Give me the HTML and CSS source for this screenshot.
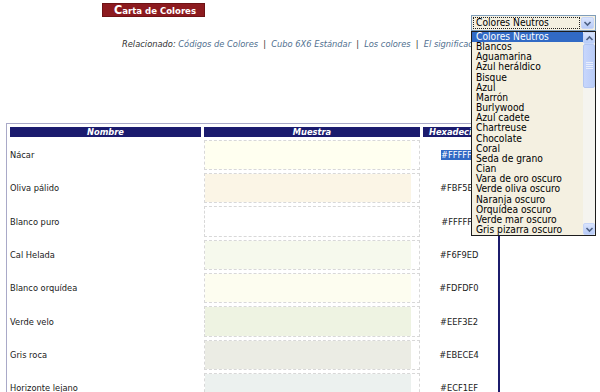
FILE: index.html
```html
<!DOCTYPE html>
<html lang="es">
<head>
<meta charset="utf-8">
<title>Carta de Colores</title>
<link rel="stylesheet" href="styles.css">
</head>
<body>
<div class="title"><span class="cap">C</span>arta de Colores</div>
<p class="related"><span class="lbl">Relacionado:</span> <a href="#">Códigos de Colores</a> <span class="sep">|</span> <a href="#">Cubo 6X6 Estándar</a> <span class="sep">|</span> <a href="#">Los colores</a> <span class="sep">|</span> <a href="#">El significado de los colores</a></p>

<table class="chart">
  <colgroup>
    <col class="c-name">
    <col class="c-chip">
    <col class="c-hex">
  </colgroup>
  <thead>
    <tr><th>Nombre</th><th>Muestra</th><th>Hexadecimal</th></tr>
  </thead>
  <tbody>
    <tr><td class="name">Nácar</td><td class="chip"><div class="fill" style="background:#FFFFF0"></div></td><td class="hex"><span class="sel">#FFFFF0</span></td></tr>
    <tr><td class="name">Oliva pálido</td><td class="chip"><div class="fill" style="background:#FBF5E6"></div></td><td class="hex">#FBF5E6</td></tr>
    <tr><td class="name">Blanco puro</td><td class="chip"><div class="fill" style="background:#FFFFFF"></div></td><td class="hex">#FFFFFF</td></tr>
    <tr><td class="name">Cal Helada</td><td class="chip"><div class="fill" style="background:#F6F9ED"></div></td><td class="hex">#F6F9ED</td></tr>
    <tr><td class="name">Blanco orquídea</td><td class="chip"><div class="fill" style="background:#FDFDF0"></div></td><td class="hex">#FDFDF0</td></tr>
    <tr><td class="name">Verde velo</td><td class="chip"><div class="fill" style="background:#EEF3E2"></div></td><td class="hex">#EEF3E2</td></tr>
    <tr><td class="name">Gris roca</td><td class="chip"><div class="fill" style="background:#EBECE4"></div></td><td class="hex">#EBECE4</td></tr>
    <tr><td class="name">Horizonte lejano</td><td class="chip"><div class="fill" style="background:#ECF1EF"></div></td><td class="hex">#ECF1EF</td></tr>
  </tbody>
</table>

<div class="select">
  <div class="focus">Colores Neutros</div>
  <div class="btn"><svg width="9" height="9" viewBox="0 0 9 9"><polyline points="1.5,3 4.5,6 7.5,3" fill="none" stroke="#4d6185" stroke-width="1.6"/></svg></div>
</div>
<div class="list">
  <ul class="items">
    <li class="on">Colores Neutros</li>
    <li>Blancos</li>
    <li>Aguamarina</li>
    <li>Azul heráldico</li>
    <li>Bisque</li>
    <li>Azul</li>
    <li>Marrón</li>
    <li>Burlywood</li>
    <li>Azul cadete</li>
    <li>Chartreuse</li>
    <li>Chocolate</li>
    <li>Coral</li>
    <li>Seda de grano</li>
    <li>Cian</li>
    <li>Vara de oro oscuro</li>
    <li>Verde oliva oscuro</li>
    <li>Naranja oscuro</li>
    <li>Orquídea oscuro</li>
    <li>Verde mar oscuro</li>
    <li>Gris pizarra oscuro</li>
  </ul>
  <div class="scroll">
    <div class="arrow"><svg width="9" height="9" viewBox="0 0 9 9"><polyline points="1.5,6 4.5,3 7.5,6" fill="none" stroke="#4d6185" stroke-width="1.6"/></svg></div>
    <div class="track">
      <div class="thumb"><svg width="7" height="8" viewBox="0 0 7 8"><path d="M0 0.5H7M0 2.5H7M0 4.5H7M0 6.5H7" stroke="#e8eefc" stroke-width="1"/></svg></div>
    </div>
    <div class="arrow"><svg width="9" height="9" viewBox="0 0 9 9"><polyline points="1.5,3 4.5,6 7.5,3" fill="none" stroke="#4d6185" stroke-width="1.6"/></svg></div>
  </div>
</div>
</body>
</html>
```

FILE: styles.css
```css
html, body {
  margin: 0;
  padding: 0;
  overflow: hidden;
  background: #fff;
}
body {
  width: 600px;
  height: 392px;
  position: relative;
  font-family: "DejaVu Sans", Verdana, sans-serif;
  font-size: 8.3px;
  color: #1a1a1a;
}

.title {
  margin: 3px 0 0 102px;
  width: 103px;
  height: 14px;
  box-sizing: border-box;
  background: #8c1a1f;
  border: 1px solid #6c1215;
  color: #fff;
  font-family: "DejaVu Sans Condensed", "DejaVu Sans", sans-serif;
  font-weight: bold;
  font-size: 9.5px;
  line-height: 12px;
  padding-left: 11px;
  white-space: nowrap;
  overflow: hidden;
}
.title .cap {
  font-size: 12.5px;
  line-height: 12px;
}

.related {
  margin: 22px 0 0 122px;
  line-height: 10px;
  font-style: italic;
  white-space: nowrap;
  color: #333;
}
.related a {
  color: #51708f;
  text-decoration: none;
}
.related .sep {
  margin: 0 2.5px;
}

.chart {
  margin: 74px 0 0 6px;
  width: 494px;
  table-layout: fixed;
  border-collapse: separate;
  border-spacing: 3px;
  border-left: 1px solid #a9a9c8;
  border-top: 1px solid #a9a9c8;
  border-right: 2px solid #1c1c6c;
  border-bottom: 2px solid #1c1c6c;
}
.c-name { width: 191px; }
.c-chip { width: 216px; }
.c-hex { width: 72px; }

.chart th {
  height: 10px;
  padding: 0;
  background: #1b1b6e;
  color: #fff;
  font-weight: bold;
  font-style: italic;
  line-height: 10px;
  text-align: center;
  white-space: nowrap;
  overflow: hidden;
}
.chart td {
  padding: 0;
  vertical-align: middle;
  line-height: 10px;
  white-space: nowrap;
}
.chart td.chip {
  border: 1px dashed #d8d8d8;
}
.fill {
  width: 206px;
  height: 28px;
}
.chart tbody tr:nth-child(3n) .fill {
  height: 29px;
}
.chart td.hex {
  text-align: center;
}
.sel {
  background: #316ac5;
  color: #fff;
}

.select {
  position: absolute;
  left: 471px;
  top: 15px;
  width: 125px;
  height: 16px;
  box-sizing: border-box;
  border: 1px solid #7f9db9;
  background: #f4f0e1;
  display: flex;
  padding: 1px;
  gap: 1px;
}
.focus {
  flex: 1;
  border: 1px dotted #222;
  font-family: "DejaVu Sans Condensed", "DejaVu Sans", sans-serif;
  font-size: 10.2px;
  line-height: 10px;
  padding-left: 2px;
  color: #000;
  white-space: nowrap;
}
.btn, .arrow {
  display: flex;
  align-items: center;
  justify-content: center;
  box-sizing: border-box;
  background: linear-gradient(#d9e4fd, #b7cbf7);
  border: 1px solid #c6d5f8;
  border-radius: 2px;
}
.btn {
  width: 13px;
}

.list {
  position: absolute;
  left: 471px;
  top: 31px;
  width: 125px;
  height: 205px;
  box-sizing: border-box;
  border: 1px solid #1c1c1c;
  background: #f4f0e1;
  display: flex;
}
.items {
  flex: 1;
  list-style: none;
  margin: 0;
  padding: 0;
  overflow: hidden;
  font-family: "DejaVu Sans Condensed", "DejaVu Sans", sans-serif;
  font-size: 10.2px;
  line-height: 10.15px;
  color: #000;
}
.items li {
  padding-left: 4px;
  white-space: nowrap;
}
.items li.on {
  background: #316ac5;
  color: #fff;
}
.scroll {
  width: 12px;
  display: flex;
  flex-direction: column;
  background: #f5f4ef;
}
.arrow {
  height: 12px;
}
.track {
  flex: 1;
}
.thumb {
  height: 44px;
  box-sizing: border-box;
  background: linear-gradient(90deg, #c7d6fc, #b9ccf7);
  border: 1px solid #b3c6f1;
  border-radius: 2px;
  display: flex;
  align-items: center;
  justify-content: center;
}
```
